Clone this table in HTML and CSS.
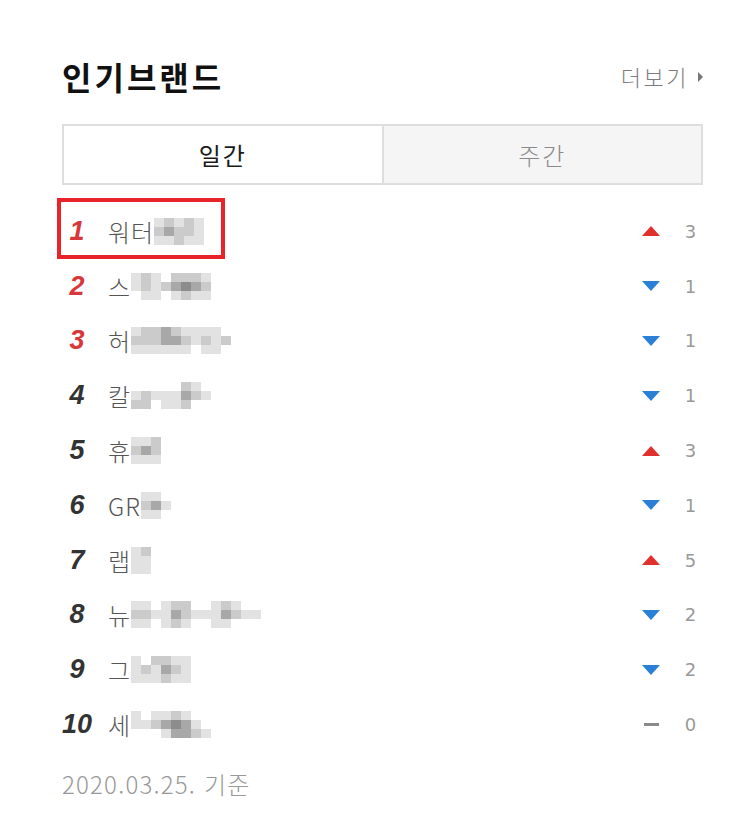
FILE: index.html
```html
<!DOCTYPE html>
<html lang="ko">
<head>
<meta charset="utf-8">
<title>인기브랜드</title>
<link rel="stylesheet" href="styles.css">
</head>
<body>
<div class="widget">
  <div class="head">
    <h2 class="title">인기브랜드</h2>
    <a class="more" href="#">더보기<span class="more-tri"></span></a>
  </div>
  <div class="tabs">
    <button class="tab on">일간</button>
    <button class="tab">주간</button>
  </div>
  <ol class="list">
    <li class="row top">
      <span class="rank hot">1</span>
      <span class="name">워터<span class="mosaic c5"><i class="g1"></i><i class="g2"></i><i class="g1"></i><i class="g2"></i><i class="g1"></i><i class="g2"></i><i class="g3"></i><i class="g2"></i><i class="g2"></i><i class="g1"></i><i class="g1"></i><i class="g1"></i><i class="g2"></i><i class="g1"></i><i class="g1"></i></span></span>
      <span class="change"><span class="arr up"></span><span class="num">3</span></span>
      <span class="mark"></span>
    </li>
    <li class="row">
      <span class="rank hot">2</span>
      <span class="name">스<span class="mosaic c8"><i class="g1"></i><i class="g2"></i><i class="g1"></i><i class="g0"></i><i class="g2"></i><i class="g2"></i><i class="g2"></i><i class="g1"></i><i class="g1"></i><i class="g2"></i><i class="g1"></i><i class="g2"></i><i class="g3"></i><i class="g4"></i><i class="g3"></i><i class="g2"></i><i class="g0"></i><i class="g1"></i><i class="g1"></i><i class="g0"></i><i class="g1"></i><i class="g2"></i><i class="g1"></i><i class="g1"></i></span></span>
      <span class="change"><span class="arr down"></span><span class="num">1</span></span>
    </li>
    <li class="row">
      <span class="rank hot">3</span>
      <span class="name">허<span class="mosaic c10"><i class="g1"></i><i class="g2"></i><i class="g2"></i><i class="g3"></i><i class="g2"></i><i class="g1"></i><i class="g1"></i><i class="g1"></i><i class="g1"></i><i class="g0"></i><i class="g2"></i><i class="g2"></i><i class="g2"></i><i class="g3"></i><i class="g3"></i><i class="g2"></i><i class="g1"></i><i class="g2"></i><i class="g1"></i><i class="g2"></i><i class="g1"></i><i class="g1"></i><i class="g1"></i><i class="g1"></i><i class="g1"></i><i class="g1"></i><i class="g0"></i><i class="g1"></i><i class="g1"></i><i class="g0"></i></span></span>
      <span class="change"><span class="arr down"></span><span class="num">1</span></span>
    </li>
    <li class="row">
      <span class="rank">4</span>
      <span class="name">칼<span class="mosaic c8"><i class="g0"></i><i class="g0"></i><i class="g0"></i><i class="g0"></i><i class="g0"></i><i class="g2"></i><i class="g1"></i><i class="g0"></i><i class="g1"></i><i class="g2"></i><i class="g1"></i><i class="g1"></i><i class="g1"></i><i class="g3"></i><i class="g2"></i><i class="g1"></i><i class="g2"></i><i class="g2"></i><i class="g0"></i><i class="g1"></i><i class="g1"></i><i class="g2"></i><i class="g0"></i><i class="g0"></i></span></span>
      <span class="change"><span class="arr down"></span><span class="num">1</span></span>
    </li>
    <li class="row">
      <span class="rank">5</span>
      <span class="name">휴<span class="mosaic c3"><i class="g1"></i><i class="g1"></i><i class="g2"></i><i class="g2"></i><i class="g3"></i><i class="g2"></i><i class="g1"></i><i class="g1"></i><i class="g1"></i></span></span>
      <span class="change"><span class="arr up"></span><span class="num">3</span></span>
    </li>
    <li class="row">
      <span class="rank">6</span>
      <span class="name">GR<span class="mosaic c3"><i class="g1"></i><i class="g1"></i><i class="g0"></i><i class="g2"></i><i class="g3"></i><i class="g1"></i><i class="g1"></i><i class="g1"></i><i class="g0"></i></span></span>
      <span class="change"><span class="arr down"></span><span class="num">1</span></span>
    </li>
    <li class="row">
      <span class="rank">7</span>
      <span class="name">랩<span class="mosaic c3"><i class="g1"></i><i class="g2"></i><i class="g0"></i><i class="g1"></i><i class="g1"></i><i class="g0"></i><i class="g1"></i><i class="g1"></i><i class="g0"></i></span></span>
      <span class="change"><span class="arr up"></span><span class="num">5</span></span>
    </li>
    <li class="row">
      <span class="rank">8</span>
      <span class="name">뉴<span class="mosaic c13"><i class="g1"></i><i class="g1"></i><i class="g0"></i><i class="g1"></i><i class="g2"></i><i class="g2"></i><i class="g0"></i><i class="g0"></i><i class="g1"></i><i class="g2"></i><i class="g1"></i><i class="g0"></i><i class="g0"></i><i class="g2"></i><i class="g2"></i><i class="g1"></i><i class="g1"></i><i class="g3"></i><i class="g2"></i><i class="g1"></i><i class="g1"></i><i class="g1"></i><i class="g3"></i><i class="g2"></i><i class="g1"></i><i class="g1"></i><i class="g1"></i><i class="g1"></i><i class="g0"></i><i class="g1"></i><i class="g2"></i><i class="g1"></i><i class="g0"></i><i class="g0"></i><i class="g1"></i><i class="g1"></i><i class="g0"></i><i class="g0"></i><i class="g0"></i></span></span>
      <span class="change"><span class="arr down"></span><span class="num">2</span></span>
    </li>
    <li class="row">
      <span class="rank">9</span>
      <span class="name">그<span class="mosaic c6"><i class="g1"></i><i class="g0"></i><i class="g2"></i><i class="g2"></i><i class="g1"></i><i class="g1"></i><i class="g1"></i><i class="g2"></i><i class="g1"></i><i class="g3"></i><i class="g2"></i><i class="g1"></i><i class="g1"></i><i class="g1"></i><i class="g1"></i><i class="g2"></i><i class="g1"></i><i class="g1"></i></span></span>
      <span class="change"><span class="arr down"></span><span class="num">2</span></span>
    </li>
    <li class="row">
      <span class="rank">10</span>
      <span class="name">세<span class="mosaic c8"><i class="g1"></i><i class="g0"></i><i class="g1"></i><i class="g1"></i><i class="g2"></i><i class="g1"></i><i class="g0"></i><i class="g0"></i><i class="g1"></i><i class="g1"></i><i class="g2"></i><i class="g3"></i><i class="g4"></i><i class="g3"></i><i class="g1"></i><i class="g0"></i><i class="g0"></i><i class="g0"></i><i class="g0"></i><i class="g1"></i><i class="g3"></i><i class="g3"></i><i class="g2"></i><i class="g1"></i></span></span>
      <span class="change"><span class="dash"></span><span class="num">0</span></span>
    </li>
  </ol>
  <p class="date">2020.03.25. 기준</p>
</div>
</body>
</html>
```

FILE: styles.css
```css
* { box-sizing: border-box; }
html, body { margin: 0; padding: 0; background: #fff; }
body {
  font-family: "Noto Sans CJK KR", "Noto Sans", sans-serif;
  color: #555;
}
.widget {
  width: 641px;
  margin-left: 62px;
  padding-top: 57px;
}
.head {
  display: flex;
  justify-content: space-between;
  align-items: center;
  height: 39px;
}
.title {
  margin: 0;
  font-size: 32px;
  line-height: 39px;
  font-weight: 700;
  color: #111;
  letter-spacing: 3px;
}
.more {
  display: flex;
  align-items: center;
  font-size: 22px;
  line-height: 39px;
  font-weight: 300;
  letter-spacing: 2.5px;
  color: #7d7d7d;
  text-decoration: none;
}
.more-tri {
  width: 0; height: 0;
  margin-left: 9px;
  border-left: 5px solid #777;
  border-top: 5px solid transparent;
  border-bottom: 5px solid transparent;
}
.tabs {
  display: flex;
  margin-top: 28px;
  height: 61px;
  border: 2px solid #dedede;
}
.tab {
  flex: 1;
  margin: 0;
  padding: 0;
  border: none;
  background: #f5f5f5;
  font-family: inherit;
  font-size: 24px;
  font-weight: 300;
  letter-spacing: 2px;
  color: #8a8a8a;
}
.tab + .tab { border-left: 2px solid #dedede; }
.tab.on { background: #fff; color: #1a1a1a; font-weight: 400; }
.list {
  list-style: none;
  margin: 19px 0 0;
  padding: 0;
}
.row {
  position: relative;
  display: flex;
  align-items: center;
  height: 54.8px;
}
.rank {
  width: 30px;
  margin-right: 16px;
  text-align: center;
  font-family: "Liberation Sans", Arial, sans-serif;
  font-weight: 700;
  font-style: italic;
  font-size: 27px;
  color: #333;
}
.rank.hot { color: #d9383a; }
.name {
  flex: 1;
  display: flex;
  align-items: center;
  font-size: 24px;
  font-weight: 300;
  letter-spacing: 1px;
  color: #555;
}
.mosaic {
  display: grid;
  grid-auto-rows: 9px;
  margin-left: 0;
}
.mosaic.c3 { grid-template-columns: repeat(3, 10px); }
.mosaic.c5 { grid-template-columns: repeat(5, 10px); }
.mosaic.c6 { grid-template-columns: repeat(6, 10px); }
.mosaic.c8 { grid-template-columns: repeat(8, 10px); }
.mosaic.c10 { grid-template-columns: repeat(10, 10px); }
.mosaic.c13 { grid-template-columns: repeat(13, 10px); }
.mosaic i { display: block; }
.g0 { background: #fff; }
.g1 { background: #e2e2e2; }
.g2 { background: #cbcbcb; }
.g3 { background: #a8a8a8; }
.g4 { background: #8c8c8c; }
.change {
  display: flex;
  align-items: center;
}
.arr {
  width: 0; height: 0;
  border-left: 9px solid transparent;
  border-right: 9px solid transparent;
}
.arr.up { border-bottom: 10px solid #e0302e; }
.arr.down { border-top: 10px solid #2a7fd6; }
.dash {
  width: 15px;
  height: 3px;
  margin: 0 1px 0 2px;
  background: #8a8a8a;
}
.num {
  width: 25px;
  margin-left: 18px;
  text-align: center;
  font-family: "DejaVu Sans", sans-serif;
  font-size: 18px;
  color: #999;
}
.mark {
  position: absolute;
  left: -5px;
  top: -6px;
  width: 168px;
  height: 61px;
  border: 4px solid #e8232a;
}
.date {
  margin: 14px 0 0;
  font-size: 24px;
  font-weight: 300;
  letter-spacing: 1.2px;
  color: #999;
}
```
